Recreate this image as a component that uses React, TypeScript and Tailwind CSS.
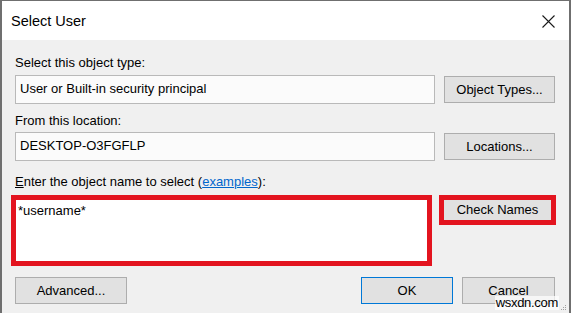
// Windows "Select User" picker dialog, with the two highlighted controls
// outlined in red as in the screenshot.

function Field({ value }: { value: string }) {
  return (
    <div className="flex h-[29px] w-[420px] items-center border border-[#b9b9b9] bg-[#fbfbfb] pb-[2px] pl-[4px]">
      {value}
    </div>
  );
}

function Btn({ label, className = "" }: { label: string; className?: string }) {
  return (
    <button
      className={`flex h-[27px] items-center justify-center border border-[#adadad] bg-[#e1e1e1] ${className}`}
    >
      {label}
    </button>
  );
}

export default function App() {
  return (
    <div className="relative flex h-[313px] w-[571px] flex-col overflow-hidden border-x-2 border-t border-[#6f6f6f] bg-[#f0f0f0] font-['Liberation_Sans',Arial,sans-serif] text-[13px] leading-4 text-black">
      <div className="flex h-[39px] items-center justify-between bg-white pl-[9px] pr-[14px]">
        <span className="pt-[1px] text-[14.5px]">Select User</span>
        <svg width="13" height="13" viewBox="0 0 13 13" className="mt-[1px]">
          <path d="M0.5 0.5 L12.5 12.5 M12.5 0.5 L0.5 12.5" stroke="#1a1a1a" strokeWidth="1.1" fill="none" />
        </svg>
      </div>

      <div className="flex flex-col px-[13px] pt-[15px]">
        <div className="mb-[4px]">Select this object type:</div>
        <div className="flex items-center gap-[9px]">
          <Field value="User or Built-in security principal" />
          <Btn label="Object Types..." className="w-[111px]" />
        </div>

        <div className="mt-[9px] mb-[3px]">From this location:</div>
        <div className="flex items-center gap-[9px]">
          <Field value="DESKTOP-O3FGFLP" />
          <Btn label="Locations..." className="w-[111px]" />
        </div>

        <div className="mt-[13px] mb-[5px]">
          <span className="underline">E</span>nter the object name to select (
          <span className="text-[#0066cc] underline">examples</span>):
        </div>
        <div className="-ml-[4px] flex items-start gap-[7px]">
          <div className="h-[71px] w-[424px] border-[5px] border-[#e3141f] bg-white px-[2px] pt-[3px]">
            *username*
          </div>
          <div className="border-[5px] border-[#e3141f]">
            <button className="flex h-[20px] w-[107px] items-center justify-center bg-[#e1e1e1]">
              Check Names
            </button>
          </div>
        </div>

        <div className="mt-[11px] flex items-center justify-between">
          <Btn label="Advanced..." className="w-[112px]" />
          <div className="mr-[1px] flex gap-[9px]">
            <button className="flex h-[27px] w-[92px] items-center justify-center border border-[#0078d7] bg-[#e1e1e1]">
              OK
            </button>
            <Btn label="Cancel" className="w-[93px]" />
          </div>
        </div>
      </div>

      <span className="absolute bottom-[3px] right-[10px] bg-white/70 px-[1px] text-[13px] leading-[14px] tracking-[-0.3px] text-black">
        wsxdn.com
      </span>
      <svg className="absolute bottom-[2px] right-[2px]" width="6" height="6" viewBox="0 0 6 6">
        <rect x="4" y="0" width="1" height="1" fill="#a0a0a0" />
        <rect x="2" y="2" width="1" height="1" fill="#a0a0a0" />
        <rect x="4" y="2" width="1" height="1" fill="#a0a0a0" />
        <rect x="0" y="4" width="1" height="1" fill="#a0a0a0" />
        <rect x="2" y="4" width="1" height="1" fill="#a0a0a0" />
        <rect x="4" y="4" width="1" height="1" fill="#a0a0a0" />
      </svg>
    </div>
  );
}
